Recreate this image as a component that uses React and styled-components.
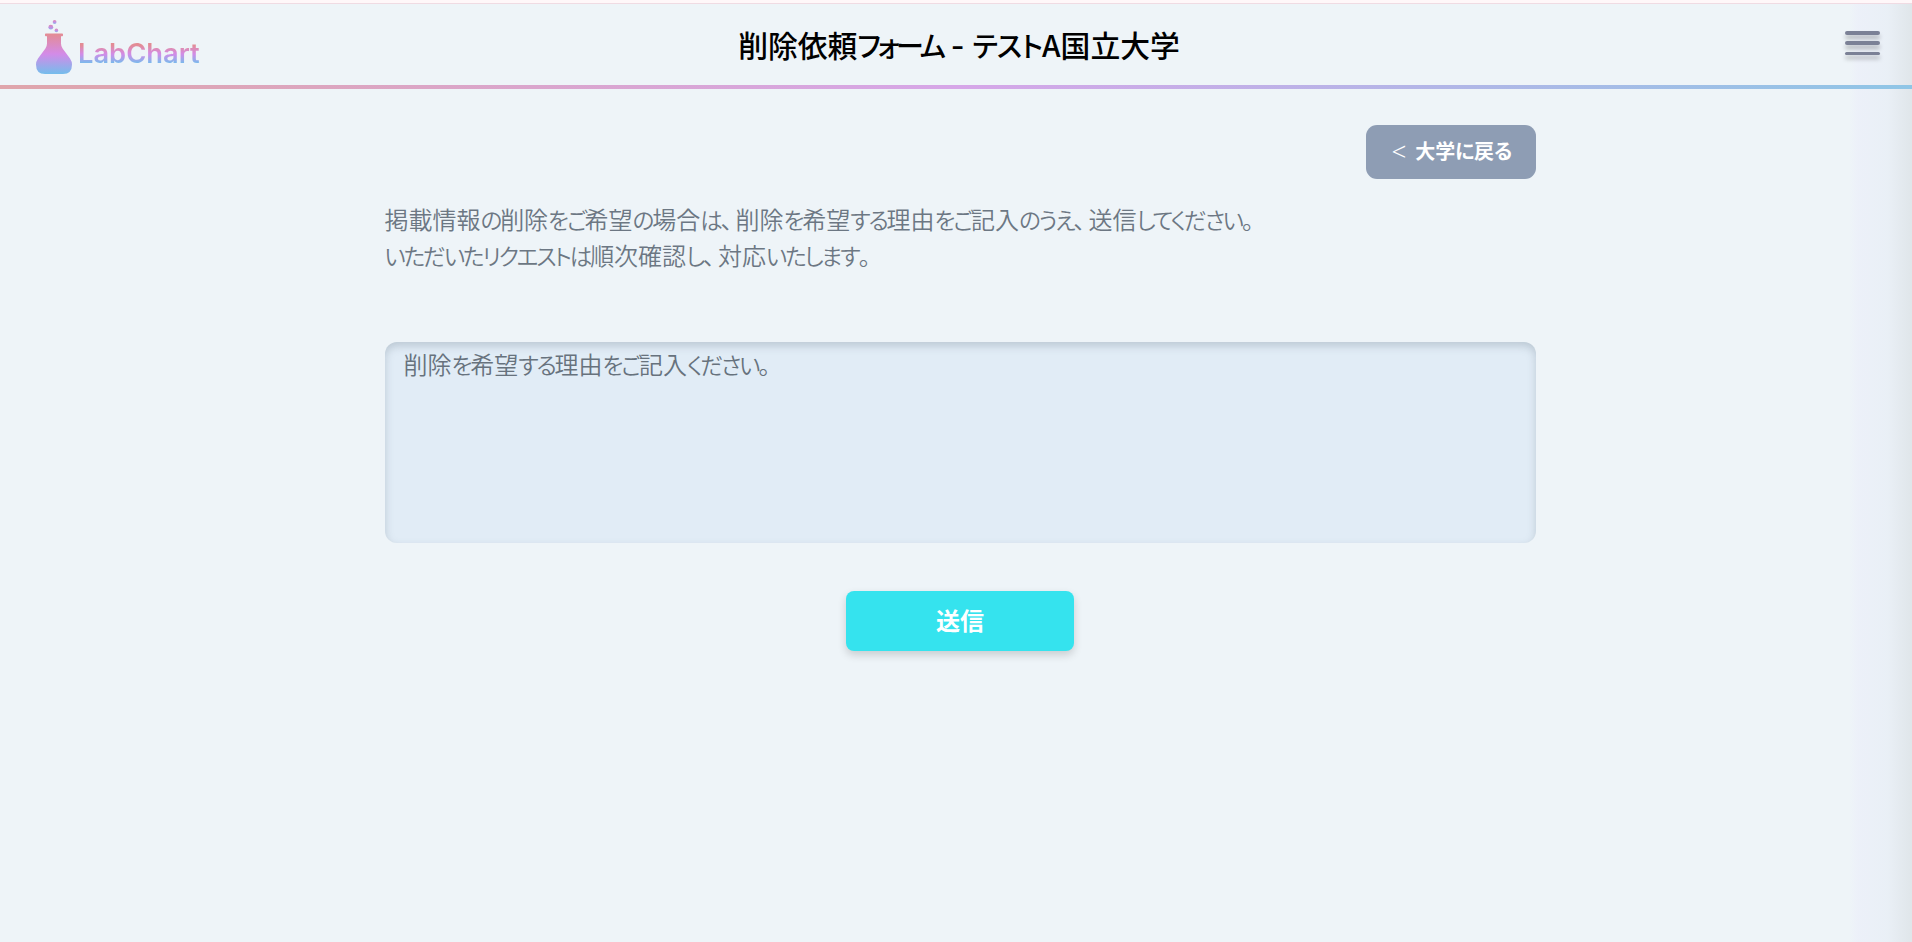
import React from "react";

//packages
import styled, { createGlobalStyle } from "styled-components";

//kana is set narrower than kanji
const JaText = ({ children }) =>
    children
        .split(/([\u3040-\u30ff]+|[、。])/)
        .filter(Boolean)
        .map((part, index) => {
            if (part === "、") return <Comma key={index}>{part}</Comma>;
            if (/[\u3040-\u30ff]/.test(part)) return <Kana key={index}>{part}</Kana>;
            return part;
        });

export default function App() {
    return (
        <Page>
            <GlobalStyle />
            <TopLine />
            <Header>
                <Logo>
                    <FlaskIcon />
                    <LogoText>LabChart</LogoText>
                </Logo>
                <Title>
                    削除依頼<Kana $spacing="-0.115em">フォーム</Kana>
                    <Dash> - </Dash>
                    <Kana $spacing="-0.03em">テスト</Kana>A国立大学
                </Title>
                <MenuButton aria-label="menu">
                    <MenuBar />
                    <MenuBar />
                    <MenuBar />
                </MenuButton>
            </Header>
            <Content>
                <BackButton>
                    <Arrow>&lt;</Arrow>
                    <BackLabel>大学に戻る</BackLabel>
                </BackButton>
                <Description>
                    <JaText>掲載情報の削除をご希望の場合は、削除を希望する理由をご記入のうえ、送信してください。</JaText>
                    <br />
                    <JaText>いただいたリクエストは順次確認し、対応いたします。</JaText>
                </Description>
                <ReasonInput role="textbox" aria-multiline="true" tabIndex={0}>
                    <JaText>削除を希望する理由をご記入ください。</JaText>
                </ReasonInput>
                <SubmitButton>送信</SubmitButton>
            </Content>
            <EdgeShadow />
        </Page>
    );
}

const FlaskIcon = () => (
    <FlaskSvg viewBox="0 0 36 54">
        <defs>
            <linearGradient id="flask" gradientUnits="userSpaceOnUse" x1="0" y1="14" x2="0" y2="54">
                <stop offset="0" stopColor="#e38c94" />
                <stop offset="0.5" stopColor="#d38be8" />
                <stop offset="1" stopColor="#74bdec" />
            </linearGradient>
            <linearGradient id="bubble" x1="0" y1="0" x2="0" y2="1">
                <stop offset="0" stopColor="#dc8bb4" />
                <stop offset="0.5" stopColor="#c78ee0" />
                <stop offset="1" stopColor="#8fb2ec" />
            </linearGradient>
        </defs>
        <circle cx="18.6" cy="2" r="1.9" fill="url(#bubble)" />
        <circle cx="14.8" cy="7.2" r="2.4" fill="url(#bubble)" />
        <circle cx="20.4" cy="10.4" r="1.8" fill="url(#bubble)" />
        <path
            d="M9.8 13.6H26.2Q27 13.6 27 14.4V15.3Q27 16.2 26.2 16.2H25V23.5Q25 26 26.6 28.5L34 38.5Q36 41.5 36 44.5Q36 54 27 54H9Q0 54 0 44.5Q0 41.5 2 38.5L9.4 28.5Q11 26 11 23.5V16.2H9.8Q9 16.2 9 15.3V14.4Q9 13.6 9.8 13.6Z"
            fill="url(#flask)"
        />
    </FlaskSvg>
);

const GlobalStyle = createGlobalStyle`
    * {
        box-sizing: border-box;
    }
    body {
        margin: 0;
        overflow: hidden;
        background: #eef4f8;
        font-family: "Noto Sans CJK JP", sans-serif;
        font-feature-settings: "palt";
    }
`;
const Kana = styled.span`
    font-size: 0.94em;
    letter-spacing: ${({ $spacing }) => $spacing || "-0.094em"};
`;
const Comma = styled.span`
    letter-spacing: 0.12em;
`;
const Page = styled.div`
    position: relative;
    width: 1920px;
    height: 942px;
    background: #eef4f8;
`;
const TopLine = styled.div`
    height: 4px;
    background: #fff7f9;
    border-bottom: 1px solid #f0dbe3;
`;
const Header = styled.header`
    position: relative;
    z-index: 1;
    display: grid;
    grid-template-columns: 1fr auto 1fr;
    height: 85px;
    padding: 0 40px 0 36px;
    border-bottom: 4px solid;
    border-image: linear-gradient(to right, #dfa5ab, #d6a6e8 50%, #8ec6e6) 1;
`;
const Logo = styled.div`
    display: flex;
    align-items: flex-start;
    padding-top: 16px;
`;
const FlaskSvg = styled.svg`
    width: 36px;
    height: 54px;
`;
const LogoText = styled.span`
    margin: 19px 0 0 6px;
    font-family: Inter, sans-serif;
    font-size: 27.3px;
    font-weight: 600;
    line-height: 30px;
    background: linear-gradient(#e38c94 20%, #d38be8 50%, #74bdec 82%);
    background-clip: text;
    color: transparent;
`;
const Title = styled.h1`
    margin: 0;
    padding: 18px 0 0 2px;
    font-size: 29.8px;
    font-weight: 500;
    line-height: 44px;
    white-space: nowrap;
    color: #000;
`;
const Dash = styled.span`
    font-family: Inter, sans-serif;
    line-height: 1;
    white-space: pre;
`;
const MenuButton = styled.button`
    display: flex;
    flex-direction: column;
    gap: 6.8px;
    justify-self: end;
    padding: 27px 0 0;
    border: 0;
    background: none;
`;
const MenuBar = styled.span`
    width: 35px;
    height: 3.6px;
    border-radius: 2px;
    background: #7b8196;
    box-shadow: 0 4px 4px rgba(0, 0, 0, 0.25);
`;
const Content = styled.main`
    display: flex;
    flex-direction: column;
    width: 1151px;
    margin: 0 auto;
    padding-top: 36px;
`;
const BackButton = styled.button`
    display: flex;
    align-items: center;
    align-self: flex-end;
    gap: 9px;
    width: 170px;
    height: 54px;
    padding: 0 0 3px 26px;
    border: 0;
    border-radius: 11px;
    background: #8e9db4;
    color: #fff;
    font-family: inherit;
    font-feature-settings: inherit;
    font-size: 20px;
    font-weight: 700;
    line-height: 30px;
    white-space: nowrap;
`;
const Arrow = styled.span`
    font-family: "Noto Sans", sans-serif;
    font-size: 26px;
    font-weight: 300;
`;
const BackLabel = styled.span`
    letter-spacing: -0.2px;
`;
const Description = styled.p`
    margin: 22px 0 0;
    color: #6c7783;
    font-size: 24px;
    font-weight: 350;
    line-height: 36px;
    white-space: nowrap;
`;
const ReasonInput = styled.div`
    height: 201px;
    margin: 69px 0 0;
    padding: 4px 19px;
    border-radius: 12px;
    outline: 0;
    background: #e1ecf6;
    box-shadow: inset 0 4px 8px rgba(80, 100, 115, 0.26);
    color: #67727d;
    font-size: 24px;
    font-weight: 350;
    line-height: 36px;
    cursor: text;
`;
const SubmitButton = styled.button`
    align-self: center;
    width: 228px;
    height: 60px;
    margin-top: 48px;
    padding: 0 0 3px;
    border: 0;
    border-radius: 8px;
    background: #35e3ee;
    box-shadow: 0 4px 8px rgba(0, 0, 0, 0.16);
    color: #fff;
    font-family: inherit;
    font-size: 24px;
    font-weight: 700;
`;
const EdgeShadow = styled.div`
    position: absolute;
    top: 4px;
    right: 8px;
    bottom: 0;
    width: 62px;
    background: linear-gradient(
        to right,
        rgba(236, 240, 249, 0),
        rgba(236, 240, 249, 0.9) 12%,
        rgba(233, 239, 246, 0.9) 60%,
        rgba(222, 228, 232, 0.9)
    );
    pointer-events: none;
`;
